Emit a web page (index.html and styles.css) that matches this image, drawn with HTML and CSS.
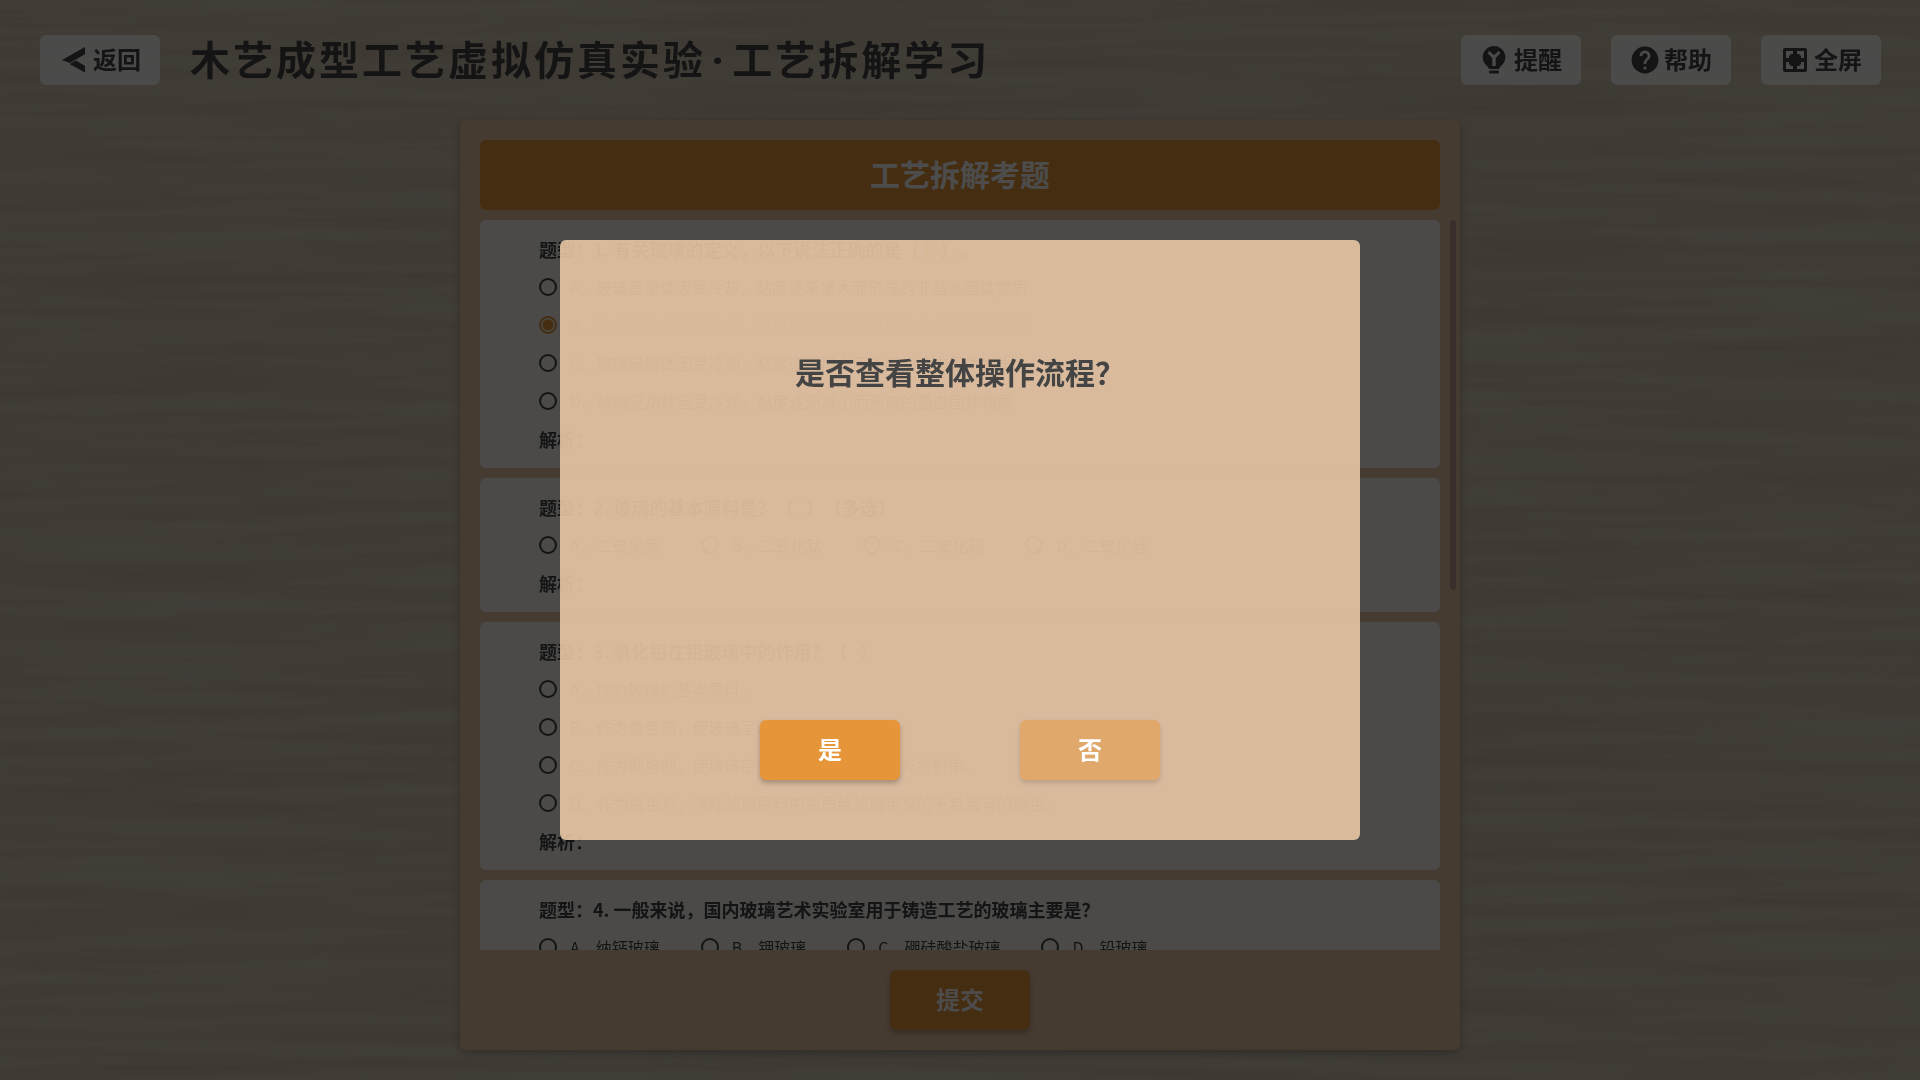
FILE: index.html
```html
<!DOCTYPE html>
<html lang="zh-CN">
<head>
<meta charset="utf-8">
<meta name="viewport" content="width=device-width, initial-scale=1">
<title>木艺成型工艺虚拟仿真实验·工艺拆解学习</title>
<link rel="stylesheet" href="styles.css">
</head>
<body>
<svg class="wood" aria-hidden="true">
  <filter id="grain" x="0" y="0" width="100%" height="100%" color-interpolation-filters="sRGB">
    <feTurbulence type="fractalNoise" baseFrequency="0.003 0.07" numOctaves="5" seed="8"/>
    <feColorMatrix values="0.08 0 0 0 0.79  0.09 0 0 0 0.73  0.11 0 0 0 0.64  0 0 0 0 1"/>
  </filter>
  <rect width="100%" height="100%" filter="url(#grain)"/>
</svg>
<div class="page">
  <header class="topbar">
    <button class="tool" type="button">
      <svg class="icon" viewBox="0 0 28 28" aria-hidden="true"><path d="M25 1v7L10 17 2 14z M9.500 18 16 14.500 25 20v6.500z"/></svg>
      <span>返回</span>
    </button>
    <h1 class="topbar-title">木艺成型工艺虚拟仿真实验<span class="dot">·</span>工艺拆解学习</h1>
    <button class="tool" type="button">
      <svg class="icon" viewBox="1 0 28 28" aria-hidden="true"><path fill-rule="evenodd" d="M14 0a11.300 11.300 0 0 1 6 20.900V21q0 2-2 2h-8q-2 0-2-2v-.1A11.300 11.300 0 0 1 14 0z M7.500 7 12.300 12v8h3.400v-8L20.500 7l-2-2L14 9.300 9.500 5z"/><rect x="9" y="24.500" width="10" height="3" rx="1"/></svg>
      <span>提醒</span>
    </button>
    <button class="tool" type="button">
      <svg class="icon" viewBox="0 0 24 24" aria-hidden="true"><path transform="translate(-1.800 -1.800) scale(1.150)" d="M12 2C6.480 2 2 6.480 2 12s4.480 10 10 10 10-4.480 10-10S17.520 2 12 2zm1 17h-2v-2h2v2zm2.070-7.750l-.9.920C13.450 12.900 13 13.500 13 15h-2v-.5c0-1.100.45-2.100 1.170-2.830l1.240-1.260c.37-.36.590-.86.590-1.410 0-1.100-.9-2-2-2s-2 .9-2 2H8c0-2.210 1.790-4 4-4s4 1.790 4 4c0 .88-.36 1.680-.93 2.250z"/></svg>
      <span>帮助</span>
    </button>
    <button class="tool" type="button">
      <svg class="icon" viewBox="0 0 28 28" aria-hidden="true"><path fill-rule="evenodd" d="M4 2h20q2 0 2 2v20q0 2-2 2H4q-2 0-2-2V4q0-2 2-2z M5 5v7h3V9.500h1.500V8H12V5z M23 5v7h-3V9.500h-1.500V8H16V5z M5 23v-7h3v2.500h1.500V20H12v3z M23 23v-7h-3v2.500h-1.500V20H16v3z"/></svg>
      <span>全屏</span>
    </button>
  </header>

  <main class="panel">
    <h2 class="panel-title">工艺拆解考题</h2>
    <form class="quiz" id="quiz">
      <fieldset class="card">
        <legend class="row question">题型：1. 有关玻璃的定义，以下说法正确的是（&nbsp;<span class="answer">B</span>&nbsp;）。</legend>
        <div class="options stacked">
          <label class="row"><input type="radio" name="q1">A、玻璃是熔体因受冷却，黏度逐渐增大而形成的非晶态固体物质</label>
          <label class="row"><input type="radio" name="q1" checked>B、玻璃是熔体因受冷却，黏度逐渐减小而形成的非晶态固体物质</label>
          <label class="row"><input type="radio" name="q1">C、玻璃是熔体因受冷却，黏度逐渐增大而形成的晶态固体物质</label>
          <label class="row"><input type="radio" name="q1">D、玻璃是熔体因受冷却，黏度逐渐减小而形成的晶态固体物质</label>
        </div>
        <p class="row question">解析：</p>
      </fieldset>
      <fieldset class="card">
        <legend class="row question">题型：2. 玻璃的基本原料是？（&nbsp;&nbsp;&nbsp;）（多选）</legend>
        <div class="options">
          <label class="row"><input type="radio" name="q2">A、二氧化氮</label>
          <label class="row"><input type="radio" name="q2">B、二氧化钛</label>
          <label class="row"><input type="radio" name="q2">C、二氧化硫</label>
          <label class="row"><input type="radio" name="q2">D、二氧化硅</label>
        </div>
        <p class="row question">解析：</p>
      </fieldset>
      <fieldset class="card">
        <legend class="row question">题型：3. 氧化铅在铅玻璃中的作用？（&nbsp;&nbsp;&nbsp;）</legend>
        <div class="options stacked">
          <label class="row"><input type="radio" name="q3">A、作为玻璃的基本原料。</label>
          <label class="row"><input type="radio" name="q3">B、作为着色剂，使玻璃呈现颜色。</label>
          <label class="row"><input type="radio" name="q3">C、作为助熔剂，使玻璃密度增大，提高玻璃的光折射率。</label>
          <label class="row"><input type="radio" name="q3">D、作为脱色剂，消除玻璃原料中杂质给玻璃带来的不希望有的颜色。</label>
        </div>
        <p class="row question">解析：</p>
      </fieldset>
      <fieldset class="card">
        <legend class="row question">题型：4. 一般来说，国内玻璃艺术实验室用于铸造工艺的玻璃主要是？</legend>
        <div class="options">
          <label class="row"><input type="radio" name="q4">A、纳钙玻璃</label>
          <label class="row"><input type="radio" name="q4">B、钾玻璃</label>
          <label class="row"><input type="radio" name="q4">C、硼硅酸盐玻璃</label>
          <label class="row"><input type="radio" name="q4">D、铅玻璃</label>
        </div>
        <p class="row question">解析：</p>
      </fieldset>
    </form>
    <div class="track" aria-hidden="true"></div>
    <button class="btn" type="submit" form="quiz">提交</button>
  </main>
</div>

<div class="mask">
  <section class="dialog" role="dialog" aria-modal="true" aria-labelledby="ask">
    <h2 class="dialog-title" id="ask">是否查看整体操作流程？</h2>
    <div class="dialog-actions">
      <button class="btn" type="button">是</button>
      <button class="btn btn-soft" type="button">否</button>
    </div>
  </section>
</div>
</body>
</html>
```
FILE: styles.css
```css
* {
  box-sizing: border-box;
  margin: 0;
}

body {
  background: #d4c8b8;
  color: #444;
  font-family: "Noto Sans", "Noto Sans CJK SC", sans-serif;
  font-size: 16px;
  text-spacing-trim: space-all;
}

button {
  border: 0;
  font: inherit;
  cursor: pointer;
}

.wood {
  position: fixed;
  inset: 0;
  width: 100%;
  height: 100%;
}

.page {
  position: relative;
  display: flex;
  flex-direction: column;
  align-items: center;
  height: 100vh;
  padding-bottom: 30px;
}

/* Top bar */
.topbar {
  display: flex;
  align-items: center;
  gap: 30px;
  width: 100%;
  height: 120px;
  padding: 0 39px 0 40px;
  flex: none;
}

.topbar-title {
  flex: 1;
  font-size: 40px;
  line-height: 60px;
  letter-spacing: 3px;
  white-space: nowrap;
}

.dot {
  margin: 0 6px;
}

.tool {
  display: flex;
  align-items: center;
  gap: 5px;
  width: 120px;
  height: 50px;
  padding: 0 0 0 20px;
  border-radius: 6px;
  background: rgba(255, 255, 255, 0.9);
  color: #444;
  font-size: 24px;
  font-weight: 700;
  line-height: 36px;
  white-space: nowrap;
}

.icon {
  width: 28px;
  height: 28px;
  fill: currentColor;
}

/* Quiz panel */
.panel {
  position: relative;
  display: flex;
  flex-direction: column;
  align-items: center;
  gap: 20px;
  flex: 1;
  min-height: 0;
  width: 100%;
  max-width: 1000px;
  padding: 20px;
  border-radius: 6px;
  background: #e8c5a5;
  box-shadow: 0 3px 8px rgba(0, 0, 0, 0.25);
}

.panel-title {
  align-self: stretch;
  flex: none;
  margin-bottom: -10px;
  border-radius: 6px;
  background: #e69639;
  color: #fff;
  font-size: 30px;
  line-height: 70px;
  text-align: center;
}

.quiz {
  align-self: stretch;
  display: flex;
  flex-direction: column;
  gap: 10px;
  flex: 1;
  min-height: 0;
  overflow: hidden;
  font-family: "Noto Sans CJK SC", sans-serif;
}

.track {
  position: absolute;
  top: 100px;
  right: 4px;
  width: 6px;
  height: 370px;
  border-radius: 3px;
  background: #c09a8e;
}

.card {
  flex: none;
  min-width: 0;
  padding: 10px 59px;
  border: 0;
  border-radius: 6px;
  background: #faf7f2;
}

.row {
  display: flex;
  align-items: center;
  height: 38px;
  padding: 0;
  line-height: 24px;
}

.question {
  float: left;
  width: 100%;
  font-size: 18px;
  font-weight: 700;
}

.answer {
  color: #e69639;
}

.options {
  clear: both;
  display: flex;
  gap: 41px;
}

.stacked {
  flex-direction: column;
  gap: 0;
}

input[type="radio"] {
  appearance: none;
  flex: none;
  width: 18px;
  height: 18px;
  margin: 0 13px 0 0;
  border: 2px solid #444;
  border-radius: 50%;
}

label:has(:checked) {
  color: #e69639;
}

input[type="radio"]:checked {
  border-color: #e69639;
  background: radial-gradient(circle, #e69639 5px, transparent 6px);
}

.btn {
  flex: none;
  width: 140px;
  height: 60px;
  border-radius: 6px;
  background: #e69639;
  box-shadow: 0 3px 5px rgba(0, 0, 0, 0.25);
  color: #fff;
  font-size: 24px;
  font-weight: 700;
  line-height: 36px;
}

.btn-soft {
  background: #e0a86a;
  box-shadow: 0 3px 5px rgba(0, 0, 0, 0.15);
}

/* Confirmation dialog */
.mask {
  position: fixed;
  inset: 0;
  display: flex;
  align-items: center;
  justify-content: center;
  background: rgba(0, 0, 0, 0.7);
}

.dialog {
  display: flex;
  flex-direction: column;
  align-items: center;
  justify-content: space-between;
  width: 800px;
  max-width: 90%;
  height: 600px;
  padding: 110px 60px 60px;
  border-radius: 6px;
  background: rgba(229, 195, 164, 0.92);
}

.dialog-title {
  font-size: 30px;
  line-height: 46px;
}

.dialog-actions {
  display: flex;
  gap: 120px;
}
```
